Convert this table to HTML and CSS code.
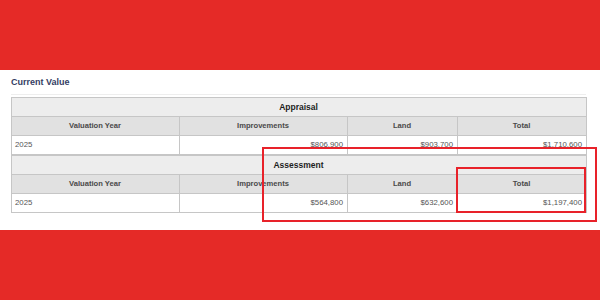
FILE: index.html
```html
<!DOCTYPE html>
<html>
<head>
<meta charset="utf-8">
<link rel="stylesheet" href="styles.css">
</head>
<body>
<div class="band"></div>
<main class="panel">
  <h2 class="title">Current Value</h2>
  <div class="wrap">
    <table class="vt">
      <colgroup><col class="c1"><col class="c2"><col class="c3"><col class="c4"></colgroup>
      <tr class="sec"><th colspan="4">Appraisal</th></tr>
      <tr class="hdr"><th>Valuation Year</th><th>Improvements</th><th>Land</th><th>Total</th></tr>
      <tr class="row"><td class="l">2025</td><td>$806,900</td><td>$903,700</td><td>$1,710,600</td></tr>
    </table>
    <table class="vt">
      <colgroup><col class="c1"><col class="c2"><col class="c3"><col class="c4"></colgroup>
      <tr class="sec"><th colspan="4">Assessment</th></tr>
      <tr class="hdr"><th>Valuation Year</th><th>Improvements</th><th>Land</th><th>Total</th></tr>
      <tr class="row"><td class="l">2025</td><td>$564,800</td><td>$632,600</td><td>$1,197,400</td></tr>
    </table>
  </div>
  <div class="mark big"></div>
  <div class="mark small"></div>
</main>
<div class="band"></div>
</body>
</html>
```

FILE: styles.css
```css
html, body { margin: 0; padding: 0; background: #e52a27; }
body { width: 600px; height: 300px; overflow: hidden; font-family: "Liberation Sans", Arial, sans-serif; }
.band { height: 70px; background: #e52a27; }
.panel { position: relative; height: 160px; background: #fff; padding: 6px 14px 0 11px; box-sizing: border-box; }
.title { margin: 0; font-size: 9px; line-height: 12px; font-weight: bold; color: #343d63; }
.wrap { margin-top: 6px; border-top: 1px solid #eeeeee; padding-top: 2px; }
.vt { width: 575px; border-collapse: collapse; table-layout: fixed; }
.c1 { width: 168px; } .c2 { width: 168px; } .c3 { width: 110px; } .c4 { width: 129px; }
.vt th, .vt td { border: 1px solid #c6c6c6; height: 18px; padding: 0 4px 0 3px; line-height: 18px; box-sizing: border-box; }
.sec th { background: #ededed; font-size: 8.5px; font-weight: bold; color: #1e1e1e; text-align: center; }
.hdr th { background: #e1e1e1; font-size: 7.6px; font-weight: bold; color: #4a4a4a; text-align: center; }
.row td { background: #fff; font-size: 7.8px; color: #555; text-align: right; }
.row td.l { text-align: left; }
.mark { position: absolute; border: 2px solid #e8222a; }
.big { left: 262px; top: 77px; width: 331px; height: 71px; }
.small { left: 456px; top: 97px; width: 126px; height: 42px; }
```
